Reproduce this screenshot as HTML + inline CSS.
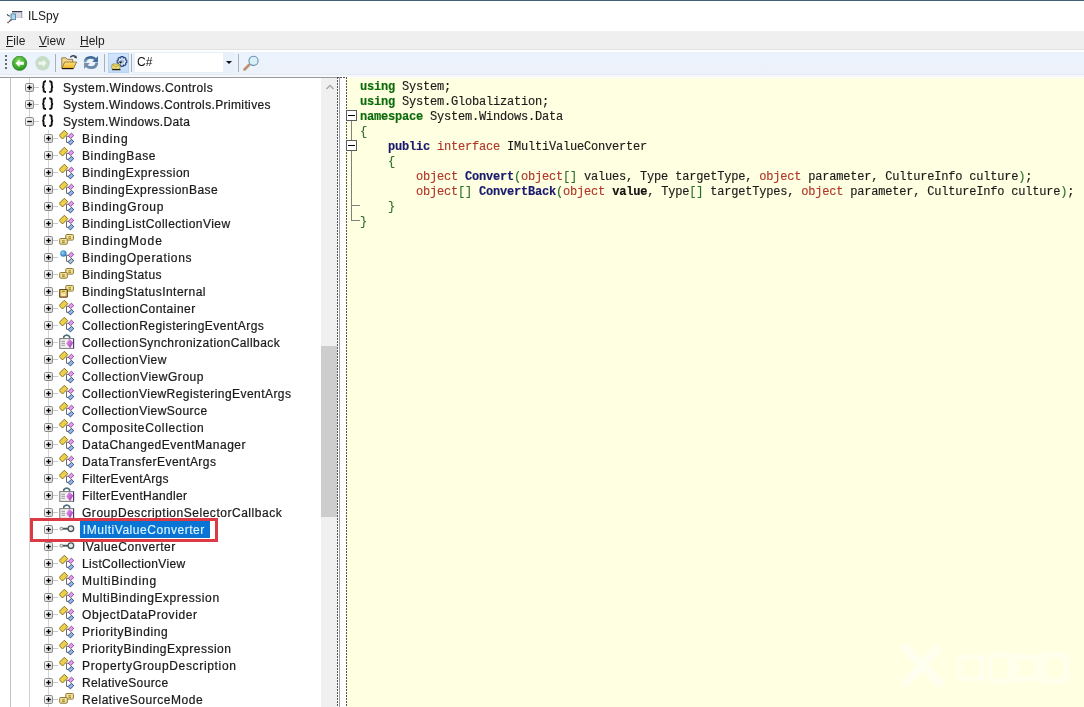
<!DOCTYPE html>
<html><head><meta charset="utf-8"><style>
*{margin:0;padding:0;box-sizing:border-box}
html,body{width:1084px;height:707px;overflow:hidden;background:#fff;font-family:"Liberation Sans",sans-serif;color:#1a1a1a}
.a{position:absolute}
.tt,.cl,.mi,#title,.gs{will-change:transform}
#topline{position:absolute;left:0;top:0;width:1084px;height:1px;background:#3f6478}
#title{position:absolute;left:28px;top:8px;font-size:12px;line-height:16px;color:#1a1a1a}
#menubar{position:absolute;left:0;top:31px;width:1084px;height:19px;background:#efefef;border-bottom:1px solid #e2e2e2}
.mi{position:absolute;top:2px;font-size:12px;line-height:16px;color:#1e1e1e}
.mi u{text-decoration:underline;text-underline-offset:1px}
#toolbar{position:absolute;left:0;top:50px;width:1084px;height:27px;background:linear-gradient(#ffffff 0 2px,#eaf3fd 2px,#edf2fa 24px,#e6eaf4 24px 25px,#f6f8fc 25px)}
.sep{position:absolute;top:54px;width:1px;height:18px;background:#a8b0bc}
#tree{position:absolute;left:0;top:77px;width:339px;height:630px;background:#fff;border-top:1px solid #9a9a9a;overflow:hidden}
.exp{position:absolute}
.ph{position:absolute;left:1.5px;top:3.2px;width:5px;height:1.3px;background:#000}
.pv{position:absolute;left:3.35px;top:1.4px;width:1.3px;height:5px;background:#000}
.hc{position:absolute;height:1px;background:#c8c8c8}
.ic{position:absolute;width:16px;height:16px}
.ic svg{display:block}
.nsi{position:absolute;font-weight:bold;font-size:12px;line-height:17px;letter-spacing:0px;color:#111}
.tt{position:absolute;-webkit-text-stroke:0.22px #1a1a1a;font-size:12px;line-height:17px;letter-spacing:0.33px;white-space:nowrap;color:#1a1a1a;padding:0 0 0 0}
.tt.sel{background:#0a74d4;color:#d8f6ff;-webkit-text-stroke:0.15px #d8f6ff;left:80px!important;padding-left:2.8px;padding-top:1px;width:130px;height:17px;overflow:visible}
#code{position:absolute;left:347px;top:78px;width:737px;height:629px;background:#ffffe1}
.cl{position:absolute;left:13px;font-family:"Liberation Mono",monospace;font-size:12px;line-height:15px;white-space:pre;letter-spacing:-0.2px;color:#1a1a1a;-webkit-text-stroke-width:0.15px}
.kg{color:#0b6b0b;font-weight:bold}
.kb{color:#191970;font-weight:bold}
.kr{color:#b0362a}
.br{color:#2f6f2f}
.fn{color:#191970;font-weight:bold}
.cl b{font-weight:bold;color:#111}
</style></head><body>
<div id="topline"></div>
<svg class="a" style="left:4px;top:6px" width="24" height="20" viewBox="0 0 24 20"><rect x="8" y="5.5" width="10.2" height="6.5" fill="#cfd0de"/><path d="M11 8H17M11 10H17" stroke="#e8eaf4" stroke-width="0.8"/><path d="M8 5.6H18.2" stroke="#2e2e44" stroke-width="1.1"/><path d="M17.8 6V12" stroke="#8a8aa0" stroke-width="0.7"/><rect x="7" y="8" width="4.4" height="5.6" fill="#aad6ee" stroke="#4a7a9a" stroke-width="0.8"/><path d="M3.3 8.2Q3.6 10.3 6.3 10" stroke="#3a5a5a" stroke-width="1.1" fill="none"/><path d="M7.3 13.8L3.6 16.8" stroke="#4a3a30" stroke-width="1.5" stroke-dasharray="1.2 0.6"/></svg>
<div id="title">ILSpy</div>
<div id="menubar">
 <div class="mi" style="left:6px"><u>F</u>ile</div>
 <div class="mi" style="left:39px"><u>V</u>iew</div>
 <div class="mi" style="left:80px"><u>H</u>elp</div>
</div>
<div id="toolbar"></div>
<div class="a" style="left:5px;top:55px;width:2px;height:14px;background:repeating-linear-gradient(#6a6a6a 0 2px,transparent 2px 4px)"></div>
<!-- back -->
<div class="a" style="left:12px;top:56px">
<svg width="16" height="16" viewBox="0 0 16 16"><defs><radialGradient id="gb" cx="0.45" cy="0.35" r="0.7"><stop offset="0" stop-color="#7ee05a"/><stop offset="1" stop-color="#1f8a1a"/></radialGradient></defs><circle cx="7.6" cy="7.3" r="7.2" fill="url(#gb)" stroke="#2a7a22" stroke-width="0.6"/><path d="M3.5 7.3L7.5 3.5V5.8H11.8V8.8H7.5V11.1Z" fill="#fff"/></svg>
</div>
<div class="a" style="left:35px;top:56px">
<svg width="16" height="16" viewBox="0 0 16 16"><circle cx="7.6" cy="7.3" r="7.2" fill="#c6dcc6"/><path d="M11.7 7.3L7.7 3.5V5.8H3.4V8.8H7.7V11.1Z" fill="#eef6ee"/></svg>
</div>
<div class="sep" style="left:55px"></div>
<!-- folder -->
<svg class="a" style="left:61px;top:54px" width="17" height="16" viewBox="0 0 17 16"><path d="M0.8 3.8H4.8L6.2 5.3H11.6V14.4H0.8Z" fill="#f3d890" stroke="#8a7048" stroke-width="0.9"/><defs><linearGradient id="fg" x1="0" y1="0" x2="0" y2="1"><stop offset="0" stop-color="#fbe27a"/><stop offset="1" stop-color="#f0b428"/></linearGradient></defs><path d="M1 14.4L3.6 8H15.6L12.6 14.4Z" fill="url(#fg)" stroke="#8a6a2a" stroke-width="0.8"/><path d="M1.2 14.6H12.4" stroke="#1a1208" stroke-width="1.2"/><path d="M9.3 3.2Q11.8 0.6 14.6 2.6" stroke="#303848" stroke-width="1.3" fill="none"/><path d="M13 3.8L16 4.6L15.4 1.4Z" fill="#303848"/></svg>
<!-- refresh -->
<svg class="a" style="left:83px;top:55px" width="16" height="15" viewBox="0 0 16 15"><defs><linearGradient id="rg" x1="0" y1="0" x2="0" y2="1"><stop offset="0" stop-color="#3a6590"/><stop offset="1" stop-color="#93abc3"/></linearGradient></defs><path d="M2.2 7.4Q2.2 2.3 8 2.3Q10.8 2.3 12.6 4.4" stroke="url(#rg)" stroke-width="2.8" fill="none"/><path d="M15 1V7H9.2Z" fill="#46709a"/><path d="M13.8 7.6Q13.8 12.7 8 12.7Q5.2 12.7 3.4 10.6" stroke="#6a88a8" stroke-width="2.8" fill="none"/><path d="M1 14V8H6.8Z" fill="#7892ae"/></svg>
<div class="sep" style="left:104px"></div>
<div class="a" style="left:108px;top:53px;width:21px;height:20px;background:linear-gradient(#d2e6fb,#c2dcf6);border:1px solid #b8d4f0"></div>
<svg class="a" style="left:108px;top:53px" width="21" height="20" viewBox="0 0 21 20"><g transform="translate(14,8.5)"><path d="M-1 -4.8H1L1.4 -3.6L2.8 -4L3.9 -2.9L3.5 -1.5L4.8 -1V1L3.5 1.5L3.9 2.9L2.8 4L1.4 3.6L1 4.8H-1L-1.4 3.6L-2.8 4L-3.9 2.9L-3.5 1.5L-4.8 1V-1L-3.5 -1.5L-3.9 -2.9L-2.8 -4L-1.4 -3.6Z" fill="#e4eef8" stroke="#2b4a86" stroke-width="1.2"/><circle r="1.6" fill="#c8daf0" stroke="#5a78a8" stroke-width="0.6"/></g><path d="M10.5 8.5H14.5L12.5 10.8Z" fill="#10182a"/><rect x="3.8" y="11" width="8.2" height="5.2" rx="1.5" fill="#f2e27a" stroke="#8a7a2a" stroke-width="0.7"/><path d="M4.6 12L7.9 14L11.2 12" stroke="#9a8a30" stroke-width="0.8" fill="none"/><path d="M4.2 16.6H12.5" stroke="#202010" stroke-width="1.3"/></svg>
<div class="sep" style="left:131px"></div>
<div class="a" style="left:134px;top:52px;width:100px;height:21px;background:#fff;border:1px solid #e6eef8"></div>
<div class="a" style="left:223px;top:53px;width:11px;height:19px;background:#e8f0fa"></div>
<div class="a" style="left:225.5px;top:61px;width:0;height:0;border-left:3px solid transparent;border-right:3px solid transparent;border-top:3px solid #111"></div>
<div class="a gs" style="left:137px;top:54px;font-size:12px;line-height:16px;color:#111">C#</div>
<div class="sep" style="left:238px"></div>
<div class="a" style="left:243px;top:55px">
<svg width="17" height="16" viewBox="0 0 17 16"><path d="M1.5 14.5L6 10" stroke="#c09070" stroke-width="2.6" stroke-linecap="round"/><circle cx="10.5" cy="5.8" r="4.6" fill="#d8f0f8" stroke="#6a90b0" stroke-width="1.1"/></svg>
</div>

<div id="tree">
</div>
<div class="a" style="left:10px;top:78px;width:1px;height:629px;background:#c4c4c4"></div>
<div class="a" style="left:29px;top:78px;width:1px;height:629px;background:#d0d0d0"></div>
<div class="a" style="left:48px;top:130px;width:1px;height:577px;background:#d4d4d4"></div>
<svg class="exp" style="left:25px;top:83px" width="9" height="9" viewBox="0 0 9 9"><defs><linearGradient id="eg" x1="0" y1="0" x2="1" y2="1"><stop offset="0" stop-color="#fff"/><stop offset="1" stop-color="#cfcfcf"/></linearGradient></defs><rect x="0.5" y="0.5" width="8" height="8" rx="1.2" fill="url(#eg)" stroke="#8a8c8c" stroke-width="1"/><path d="M2.2 4.5H6.8" stroke="#000" stroke-width="1.3"/><path d="M4.5 2.2V6.8" stroke="#000" stroke-width="1.3"/></svg>
<div class="hc" style="left:34px;top:87px;width:5px"></div>
<svg class="a" style="left:42px;top:79px" width="12" height="16" viewBox="0 0 12 16"><path d="M4 2.3Q1.6 2.3 1.6 4.2V6.2Q1.6 7.7 0.2 7.7Q1.6 7.7 1.6 9.2V11.2Q1.6 13 4 13" stroke="#111" stroke-width="1.9" fill="none"/><path d="M7.3 2.3Q9.7 2.3 9.7 4.2V6.2Q9.7 7.7 11.1 7.7Q9.7 7.7 9.7 9.2V11.2Q9.7 13 7.3 13" stroke="#111" stroke-width="1.9" fill="none"/></svg>
<div class="tt" style="left:63px;top:80px;letter-spacing:0.439px">System.Windows.Controls</div>
<svg class="exp" style="left:25px;top:100px" width="9" height="9" viewBox="0 0 9 9"><defs><linearGradient id="eg" x1="0" y1="0" x2="1" y2="1"><stop offset="0" stop-color="#fff"/><stop offset="1" stop-color="#cfcfcf"/></linearGradient></defs><rect x="0.5" y="0.5" width="8" height="8" rx="1.2" fill="url(#eg)" stroke="#8a8c8c" stroke-width="1"/><path d="M2.2 4.5H6.8" stroke="#000" stroke-width="1.3"/><path d="M4.5 2.2V6.8" stroke="#000" stroke-width="1.3"/></svg>
<div class="hc" style="left:34px;top:104px;width:5px"></div>
<svg class="a" style="left:42px;top:96px" width="12" height="16" viewBox="0 0 12 16"><path d="M4 2.3Q1.6 2.3 1.6 4.2V6.2Q1.6 7.7 0.2 7.7Q1.6 7.7 1.6 9.2V11.2Q1.6 13 4 13" stroke="#111" stroke-width="1.9" fill="none"/><path d="M7.3 2.3Q9.7 2.3 9.7 4.2V6.2Q9.7 7.7 11.1 7.7Q9.7 7.7 9.7 9.2V11.2Q9.7 13 7.3 13" stroke="#111" stroke-width="1.9" fill="none"/></svg>
<div class="tt" style="left:63px;top:97px;letter-spacing:0.369px">System.Windows.Controls.Primitives</div>
<svg class="exp" style="left:25px;top:117px" width="9" height="9" viewBox="0 0 9 9"><defs><linearGradient id="eg" x1="0" y1="0" x2="1" y2="1"><stop offset="0" stop-color="#fff"/><stop offset="1" stop-color="#cfcfcf"/></linearGradient></defs><rect x="0.5" y="0.5" width="8" height="8" rx="1.2" fill="url(#eg)" stroke="#8a8c8c" stroke-width="1"/><path d="M2.2 4.5H6.8" stroke="#000" stroke-width="1.3"/></svg>
<div class="hc" style="left:34px;top:121px;width:5px"></div>
<svg class="a" style="left:42px;top:113px" width="12" height="16" viewBox="0 0 12 16"><path d="M4 2.3Q1.6 2.3 1.6 4.2V6.2Q1.6 7.7 0.2 7.7Q1.6 7.7 1.6 9.2V11.2Q1.6 13 4 13" stroke="#111" stroke-width="1.9" fill="none"/><path d="M7.3 2.3Q9.7 2.3 9.7 4.2V6.2Q9.7 7.7 11.1 7.7Q9.7 7.7 9.7 9.2V11.2Q9.7 13 7.3 13" stroke="#111" stroke-width="1.9" fill="none"/></svg>
<div class="tt" style="left:63px;top:114px;letter-spacing:0.341px">System.Windows.Data</div>
<svg class="exp" style="left:44px;top:134px" width="9" height="9" viewBox="0 0 9 9"><defs><linearGradient id="eg" x1="0" y1="0" x2="1" y2="1"><stop offset="0" stop-color="#fff"/><stop offset="1" stop-color="#cfcfcf"/></linearGradient></defs><rect x="0.5" y="0.5" width="8" height="8" rx="1.2" fill="url(#eg)" stroke="#8a8c8c" stroke-width="1"/><path d="M2.2 4.5H6.8" stroke="#000" stroke-width="1.3"/><path d="M4.5 2.2V6.8" stroke="#000" stroke-width="1.3"/></svg>
<div class="hc" style="left:53px;top:138px;width:5px"></div>
<div class="ic" style="left:59px;top:130px"><svg width="16" height="16" viewBox="0 0 16 16"><path d="M7.5 6.3H10M7.5 6.3V12.3H10" stroke="#6a6a6a" stroke-width="1" fill="none"/><path d="M5.3 0.3L8.8 3.7L3.5 9L0.1 5.5Z" fill="#ecd04a" stroke="#7a6418" stroke-width="0.9"/><path d="M12.4 3.2L14.8 5.5L11.6 8.6L9.3 6.2Z" fill="#e79be8" stroke="#7b3f8e" stroke-width="0.9"/><path d="M12.4 9.3L14.8 11.6L11.4 14.9L9.1 12.6Z" fill="#93b4e6" stroke="#203f78" stroke-width="0.9"/></svg></div>
<div class="tt" style="left:82px;top:131px;letter-spacing:0.930px">Binding</div>
<svg class="exp" style="left:44px;top:151px" width="9" height="9" viewBox="0 0 9 9"><defs><linearGradient id="eg" x1="0" y1="0" x2="1" y2="1"><stop offset="0" stop-color="#fff"/><stop offset="1" stop-color="#cfcfcf"/></linearGradient></defs><rect x="0.5" y="0.5" width="8" height="8" rx="1.2" fill="url(#eg)" stroke="#8a8c8c" stroke-width="1"/><path d="M2.2 4.5H6.8" stroke="#000" stroke-width="1.3"/><path d="M4.5 2.2V6.8" stroke="#000" stroke-width="1.3"/></svg>
<div class="hc" style="left:53px;top:155px;width:5px"></div>
<div class="ic" style="left:59px;top:147px"><svg width="16" height="16" viewBox="0 0 16 16"><path d="M7.5 6.3H10M7.5 6.3V12.3H10" stroke="#6a6a6a" stroke-width="1" fill="none"/><path d="M5.3 0.3L8.8 3.7L3.5 9L0.1 5.5Z" fill="#ecd04a" stroke="#7a6418" stroke-width="0.9"/><path d="M12.4 3.2L14.8 5.5L11.6 8.6L9.3 6.2Z" fill="#e79be8" stroke="#7b3f8e" stroke-width="0.9"/><path d="M12.4 9.3L14.8 11.6L11.4 14.9L9.1 12.6Z" fill="#93b4e6" stroke="#203f78" stroke-width="0.9"/></svg></div>
<div class="tt" style="left:82px;top:148px;letter-spacing:0.610px">BindingBase</div>
<svg class="exp" style="left:44px;top:168px" width="9" height="9" viewBox="0 0 9 9"><defs><linearGradient id="eg" x1="0" y1="0" x2="1" y2="1"><stop offset="0" stop-color="#fff"/><stop offset="1" stop-color="#cfcfcf"/></linearGradient></defs><rect x="0.5" y="0.5" width="8" height="8" rx="1.2" fill="url(#eg)" stroke="#8a8c8c" stroke-width="1"/><path d="M2.2 4.5H6.8" stroke="#000" stroke-width="1.3"/><path d="M4.5 2.2V6.8" stroke="#000" stroke-width="1.3"/></svg>
<div class="hc" style="left:53px;top:172px;width:5px"></div>
<div class="ic" style="left:59px;top:164px"><svg width="16" height="16" viewBox="0 0 16 16"><path d="M7.5 6.3H10M7.5 6.3V12.3H10" stroke="#6a6a6a" stroke-width="1" fill="none"/><path d="M5.3 0.3L8.8 3.7L3.5 9L0.1 5.5Z" fill="#ecd04a" stroke="#7a6418" stroke-width="0.9"/><path d="M12.4 3.2L14.8 5.5L11.6 8.6L9.3 6.2Z" fill="#e79be8" stroke="#7b3f8e" stroke-width="0.9"/><path d="M12.4 9.3L14.8 11.6L11.4 14.9L9.1 12.6Z" fill="#93b4e6" stroke="#203f78" stroke-width="0.9"/></svg></div>
<div class="tt" style="left:82px;top:165px;letter-spacing:0.524px">BindingExpression</div>
<svg class="exp" style="left:44px;top:185px" width="9" height="9" viewBox="0 0 9 9"><defs><linearGradient id="eg" x1="0" y1="0" x2="1" y2="1"><stop offset="0" stop-color="#fff"/><stop offset="1" stop-color="#cfcfcf"/></linearGradient></defs><rect x="0.5" y="0.5" width="8" height="8" rx="1.2" fill="url(#eg)" stroke="#8a8c8c" stroke-width="1"/><path d="M2.2 4.5H6.8" stroke="#000" stroke-width="1.3"/><path d="M4.5 2.2V6.8" stroke="#000" stroke-width="1.3"/></svg>
<div class="hc" style="left:53px;top:189px;width:5px"></div>
<div class="ic" style="left:59px;top:181px"><svg width="16" height="16" viewBox="0 0 16 16"><path d="M7.5 6.3H10M7.5 6.3V12.3H10" stroke="#6a6a6a" stroke-width="1" fill="none"/><path d="M5.3 0.3L8.8 3.7L3.5 9L0.1 5.5Z" fill="#ecd04a" stroke="#7a6418" stroke-width="0.9"/><path d="M12.4 3.2L14.8 5.5L11.6 8.6L9.3 6.2Z" fill="#e79be8" stroke="#7b3f8e" stroke-width="0.9"/><path d="M12.4 9.3L14.8 11.6L11.4 14.9L9.1 12.6Z" fill="#93b4e6" stroke="#203f78" stroke-width="0.9"/></svg></div>
<div class="tt" style="left:82px;top:182px;letter-spacing:0.445px">BindingExpressionBase</div>
<svg class="exp" style="left:44px;top:202px" width="9" height="9" viewBox="0 0 9 9"><defs><linearGradient id="eg" x1="0" y1="0" x2="1" y2="1"><stop offset="0" stop-color="#fff"/><stop offset="1" stop-color="#cfcfcf"/></linearGradient></defs><rect x="0.5" y="0.5" width="8" height="8" rx="1.2" fill="url(#eg)" stroke="#8a8c8c" stroke-width="1"/><path d="M2.2 4.5H6.8" stroke="#000" stroke-width="1.3"/><path d="M4.5 2.2V6.8" stroke="#000" stroke-width="1.3"/></svg>
<div class="hc" style="left:53px;top:206px;width:5px"></div>
<div class="ic" style="left:59px;top:198px"><svg width="16" height="16" viewBox="0 0 16 16"><path d="M7.5 6.3H10M7.5 6.3V12.3H10" stroke="#6a6a6a" stroke-width="1" fill="none"/><path d="M5.3 0.3L8.8 3.7L3.5 9L0.1 5.5Z" fill="#ecd04a" stroke="#7a6418" stroke-width="0.9"/><path d="M12.4 3.2L14.8 5.5L11.6 8.6L9.3 6.2Z" fill="#e79be8" stroke="#7b3f8e" stroke-width="0.9"/><path d="M12.4 9.3L14.8 11.6L11.4 14.9L9.1 12.6Z" fill="#93b4e6" stroke="#203f78" stroke-width="0.9"/></svg></div>
<div class="tt" style="left:82px;top:199px;letter-spacing:0.730px">BindingGroup</div>
<svg class="exp" style="left:44px;top:219px" width="9" height="9" viewBox="0 0 9 9"><defs><linearGradient id="eg" x1="0" y1="0" x2="1" y2="1"><stop offset="0" stop-color="#fff"/><stop offset="1" stop-color="#cfcfcf"/></linearGradient></defs><rect x="0.5" y="0.5" width="8" height="8" rx="1.2" fill="url(#eg)" stroke="#8a8c8c" stroke-width="1"/><path d="M2.2 4.5H6.8" stroke="#000" stroke-width="1.3"/><path d="M4.5 2.2V6.8" stroke="#000" stroke-width="1.3"/></svg>
<div class="hc" style="left:53px;top:223px;width:5px"></div>
<div class="ic" style="left:59px;top:215px"><svg width="16" height="16" viewBox="0 0 16 16"><path d="M7.5 6.3H10M7.5 6.3V12.3H10" stroke="#6a6a6a" stroke-width="1" fill="none"/><path d="M5.3 0.3L8.8 3.7L3.5 9L0.1 5.5Z" fill="#ecd04a" stroke="#7a6418" stroke-width="0.9"/><path d="M12.4 3.2L14.8 5.5L11.6 8.6L9.3 6.2Z" fill="#e79be8" stroke="#7b3f8e" stroke-width="0.9"/><path d="M12.4 9.3L14.8 11.6L11.4 14.9L9.1 12.6Z" fill="#93b4e6" stroke="#203f78" stroke-width="0.9"/></svg></div>
<div class="tt" style="left:82px;top:216px;letter-spacing:0.455px">BindingListCollectionView</div>
<svg class="exp" style="left:44px;top:236px" width="9" height="9" viewBox="0 0 9 9"><defs><linearGradient id="eg" x1="0" y1="0" x2="1" y2="1"><stop offset="0" stop-color="#fff"/><stop offset="1" stop-color="#cfcfcf"/></linearGradient></defs><rect x="0.5" y="0.5" width="8" height="8" rx="1.2" fill="url(#eg)" stroke="#8a8c8c" stroke-width="1"/><path d="M2.2 4.5H6.8" stroke="#000" stroke-width="1.3"/><path d="M4.5 2.2V6.8" stroke="#000" stroke-width="1.3"/></svg>
<div class="hc" style="left:53px;top:240px;width:5px"></div>
<div class="ic" style="left:59px;top:232px"><svg width="16" height="16" viewBox="0 0 16 16"><rect x="6.8" y="2.5" width="7.6" height="5.6" rx="0.8" fill="#f3e39a" stroke="#8f7a35" stroke-width="1"/><path d="M9.5 4.8H12M9.5 6.3H12" stroke="#8a7020" stroke-width="0.9"/><rect x="0.7" y="6.5" width="7.6" height="5.7" rx="0.8" fill="#f3e39a" stroke="#8f7a35" stroke-width="1"/><path d="M3 8.8H5.8M3 10.3H5.8" stroke="#8a7020" stroke-width="0.9"/></svg></div>
<div class="tt" style="left:82px;top:233px;letter-spacing:0.980px">BindingMode</div>
<svg class="exp" style="left:44px;top:253px" width="9" height="9" viewBox="0 0 9 9"><defs><linearGradient id="eg" x1="0" y1="0" x2="1" y2="1"><stop offset="0" stop-color="#fff"/><stop offset="1" stop-color="#cfcfcf"/></linearGradient></defs><rect x="0.5" y="0.5" width="8" height="8" rx="1.2" fill="url(#eg)" stroke="#8a8c8c" stroke-width="1"/><path d="M2.2 4.5H6.8" stroke="#000" stroke-width="1.3"/><path d="M4.5 2.2V6.8" stroke="#000" stroke-width="1.3"/></svg>
<div class="hc" style="left:53px;top:257px;width:5px"></div>
<div class="ic" style="left:59px;top:249px"><svg width="16" height="16" viewBox="0 0 16 16"><defs><radialGradient id="bb" cx="0.4" cy="0.4" r="0.6"><stop offset="0" stop-color="#8cd0f4"/><stop offset="1" stop-color="#2f7ab8"/></radialGradient></defs><path d="M7.5 6.3H10M7.5 6.3V12.3H10" stroke="#6a6a6a" stroke-width="1" fill="none"/><circle cx="4.4" cy="4.5" r="3.2" fill="url(#bb)"/><path d="M12.4 3.2L14.8 5.5L11.6 8.6L9.3 6.2Z" fill="#e79be8" stroke="#7b3f8e" stroke-width="0.9"/><path d="M12.4 9.3L14.8 11.6L11.4 14.9L9.1 12.6Z" fill="#a8c8e0" stroke="#1f3a50" stroke-width="0.9"/></svg></div>
<div class="tt" style="left:82px;top:250px;letter-spacing:0.674px">BindingOperations</div>
<svg class="exp" style="left:44px;top:270px" width="9" height="9" viewBox="0 0 9 9"><defs><linearGradient id="eg" x1="0" y1="0" x2="1" y2="1"><stop offset="0" stop-color="#fff"/><stop offset="1" stop-color="#cfcfcf"/></linearGradient></defs><rect x="0.5" y="0.5" width="8" height="8" rx="1.2" fill="url(#eg)" stroke="#8a8c8c" stroke-width="1"/><path d="M2.2 4.5H6.8" stroke="#000" stroke-width="1.3"/><path d="M4.5 2.2V6.8" stroke="#000" stroke-width="1.3"/></svg>
<div class="hc" style="left:53px;top:274px;width:5px"></div>
<div class="ic" style="left:59px;top:266px"><svg width="16" height="16" viewBox="0 0 16 16"><rect x="6.8" y="2.5" width="7.6" height="5.6" rx="0.8" fill="#f3e39a" stroke="#8f7a35" stroke-width="1"/><path d="M9.5 4.8H12M9.5 6.3H12" stroke="#8a7020" stroke-width="0.9"/><rect x="0.7" y="6.5" width="7.6" height="5.7" rx="0.8" fill="#f3e39a" stroke="#8f7a35" stroke-width="1"/><path d="M3 8.8H5.8M3 10.3H5.8" stroke="#8a7020" stroke-width="0.9"/></svg></div>
<div class="tt" style="left:82px;top:267px;letter-spacing:0.455px">BindingStatus</div>
<svg class="exp" style="left:44px;top:287px" width="9" height="9" viewBox="0 0 9 9"><defs><linearGradient id="eg" x1="0" y1="0" x2="1" y2="1"><stop offset="0" stop-color="#fff"/><stop offset="1" stop-color="#cfcfcf"/></linearGradient></defs><rect x="0.5" y="0.5" width="8" height="8" rx="1.2" fill="url(#eg)" stroke="#8a8c8c" stroke-width="1"/><path d="M2.2 4.5H6.8" stroke="#000" stroke-width="1.3"/><path d="M4.5 2.2V6.8" stroke="#000" stroke-width="1.3"/></svg>
<div class="hc" style="left:53px;top:291px;width:5px"></div>
<div class="ic" style="left:59px;top:283px"><svg width="16" height="16" viewBox="0 0 16 16"><rect x="6.8" y="2.5" width="7.6" height="5.6" rx="0.8" fill="#f3e39a" stroke="#8f7a35" stroke-width="1"/><path d="M9.5 4.8H12M9.5 6.3H12" stroke="#8a7020" stroke-width="0.9"/><rect x="0.7" y="6.5" width="7.6" height="7.6" rx="0.5" fill="#ecd27a" stroke="#6a4a18" stroke-width="1.2"/><path d="M3 8.3H5.8" stroke="#8a7020" stroke-width="0.9"/><path d="M2.6 10.8Q4.4 13.6 6.2 10.8" stroke="#fff4cc" stroke-width="1.3" fill="none"/></svg></div>
<div class="tt" style="left:82px;top:284px;letter-spacing:0.470px">BindingStatusInternal</div>
<svg class="exp" style="left:44px;top:304px" width="9" height="9" viewBox="0 0 9 9"><defs><linearGradient id="eg" x1="0" y1="0" x2="1" y2="1"><stop offset="0" stop-color="#fff"/><stop offset="1" stop-color="#cfcfcf"/></linearGradient></defs><rect x="0.5" y="0.5" width="8" height="8" rx="1.2" fill="url(#eg)" stroke="#8a8c8c" stroke-width="1"/><path d="M2.2 4.5H6.8" stroke="#000" stroke-width="1.3"/><path d="M4.5 2.2V6.8" stroke="#000" stroke-width="1.3"/></svg>
<div class="hc" style="left:53px;top:308px;width:5px"></div>
<div class="ic" style="left:59px;top:300px"><svg width="16" height="16" viewBox="0 0 16 16"><path d="M7.5 6.3H10M7.5 6.3V12.3H10" stroke="#6a6a6a" stroke-width="1" fill="none"/><path d="M5.3 0.3L8.8 3.7L3.5 9L0.1 5.5Z" fill="#ecd04a" stroke="#7a6418" stroke-width="0.9"/><path d="M12.4 3.2L14.8 5.5L11.6 8.6L9.3 6.2Z" fill="#e79be8" stroke="#7b3f8e" stroke-width="0.9"/><path d="M12.4 9.3L14.8 11.6L11.4 14.9L9.1 12.6Z" fill="#93b4e6" stroke="#203f78" stroke-width="0.9"/></svg></div>
<div class="tt" style="left:82px;top:301px;letter-spacing:0.469px">CollectionContainer</div>
<svg class="exp" style="left:44px;top:321px" width="9" height="9" viewBox="0 0 9 9"><defs><linearGradient id="eg" x1="0" y1="0" x2="1" y2="1"><stop offset="0" stop-color="#fff"/><stop offset="1" stop-color="#cfcfcf"/></linearGradient></defs><rect x="0.5" y="0.5" width="8" height="8" rx="1.2" fill="url(#eg)" stroke="#8a8c8c" stroke-width="1"/><path d="M2.2 4.5H6.8" stroke="#000" stroke-width="1.3"/><path d="M4.5 2.2V6.8" stroke="#000" stroke-width="1.3"/></svg>
<div class="hc" style="left:53px;top:325px;width:5px"></div>
<div class="ic" style="left:59px;top:317px"><svg width="16" height="16" viewBox="0 0 16 16"><path d="M7.5 6.3H10M7.5 6.3V12.3H10" stroke="#6a6a6a" stroke-width="1" fill="none"/><path d="M5.3 0.3L8.8 3.7L3.5 9L0.1 5.5Z" fill="#ecd04a" stroke="#7a6418" stroke-width="0.9"/><path d="M12.4 3.2L14.8 5.5L11.6 8.6L9.3 6.2Z" fill="#e79be8" stroke="#7b3f8e" stroke-width="0.9"/><path d="M12.4 9.3L14.8 11.6L11.4 14.9L9.1 12.6Z" fill="#93b4e6" stroke="#203f78" stroke-width="0.9"/></svg></div>
<div class="tt" style="left:82px;top:318px;letter-spacing:0.451px">CollectionRegisteringEventArgs</div>
<svg class="exp" style="left:44px;top:338px" width="9" height="9" viewBox="0 0 9 9"><defs><linearGradient id="eg" x1="0" y1="0" x2="1" y2="1"><stop offset="0" stop-color="#fff"/><stop offset="1" stop-color="#cfcfcf"/></linearGradient></defs><rect x="0.5" y="0.5" width="8" height="8" rx="1.2" fill="url(#eg)" stroke="#8a8c8c" stroke-width="1"/><path d="M2.2 4.5H6.8" stroke="#000" stroke-width="1.3"/><path d="M4.5 2.2V6.8" stroke="#000" stroke-width="1.3"/></svg>
<div class="hc" style="left:53px;top:342px;width:5px"></div>
<div class="ic" style="left:59px;top:334px"><svg width="16" height="16" viewBox="0 0 16 16"><path d="M4.8 4.6V2.6Q7.7 -0.4 10.6 2.6V4.6" stroke="#4e6e7c" stroke-width="1.6" fill="none"/><rect x="0.8" y="4.6" width="13.8" height="9.8" fill="#f2f2f2" stroke="#787878" stroke-width="1"/><path d="M2.4 7.3H6M2.4 9.3H6M2.4 11.3H6" stroke="#8a8a8a" stroke-width="0.9"/><defs><linearGradient id="dg" x1="0" y1="0" x2="1" y2="1"><stop offset="0" stop-color="#f0a0f0"/><stop offset="1" stop-color="#a030b0"/></linearGradient></defs><path d="M10.2 4.8L14.2 8.6L11.2 14.2L7.2 9.6Z" fill="url(#dg)"/><path d="M14.6 4.8V14.4" stroke="#3a3a6a" stroke-width="1"/></svg></div>
<div class="tt" style="left:82px;top:335px;letter-spacing:0.424px">CollectionSynchronizationCallback</div>
<svg class="exp" style="left:44px;top:355px" width="9" height="9" viewBox="0 0 9 9"><defs><linearGradient id="eg" x1="0" y1="0" x2="1" y2="1"><stop offset="0" stop-color="#fff"/><stop offset="1" stop-color="#cfcfcf"/></linearGradient></defs><rect x="0.5" y="0.5" width="8" height="8" rx="1.2" fill="url(#eg)" stroke="#8a8c8c" stroke-width="1"/><path d="M2.2 4.5H6.8" stroke="#000" stroke-width="1.3"/><path d="M4.5 2.2V6.8" stroke="#000" stroke-width="1.3"/></svg>
<div class="hc" style="left:53px;top:359px;width:5px"></div>
<div class="ic" style="left:59px;top:351px"><svg width="16" height="16" viewBox="0 0 16 16"><path d="M7.5 6.3H10M7.5 6.3V12.3H10" stroke="#6a6a6a" stroke-width="1" fill="none"/><path d="M5.3 0.3L8.8 3.7L3.5 9L0.1 5.5Z" fill="#ecd04a" stroke="#7a6418" stroke-width="0.9"/><path d="M12.4 3.2L14.8 5.5L11.6 8.6L9.3 6.2Z" fill="#e79be8" stroke="#7b3f8e" stroke-width="0.9"/><path d="M12.4 9.3L14.8 11.6L11.4 14.9L9.1 12.6Z" fill="#93b4e6" stroke="#203f78" stroke-width="0.9"/></svg></div>
<div class="tt" style="left:82px;top:352px;letter-spacing:0.453px">CollectionView</div>
<svg class="exp" style="left:44px;top:372px" width="9" height="9" viewBox="0 0 9 9"><defs><linearGradient id="eg" x1="0" y1="0" x2="1" y2="1"><stop offset="0" stop-color="#fff"/><stop offset="1" stop-color="#cfcfcf"/></linearGradient></defs><rect x="0.5" y="0.5" width="8" height="8" rx="1.2" fill="url(#eg)" stroke="#8a8c8c" stroke-width="1"/><path d="M2.2 4.5H6.8" stroke="#000" stroke-width="1.3"/><path d="M4.5 2.2V6.8" stroke="#000" stroke-width="1.3"/></svg>
<div class="hc" style="left:53px;top:376px;width:5px"></div>
<div class="ic" style="left:59px;top:368px"><svg width="16" height="16" viewBox="0 0 16 16"><path d="M7.5 6.3H10M7.5 6.3V12.3H10" stroke="#6a6a6a" stroke-width="1" fill="none"/><path d="M5.3 0.3L8.8 3.7L3.5 9L0.1 5.5Z" fill="#ecd04a" stroke="#7a6418" stroke-width="0.9"/><path d="M12.4 3.2L14.8 5.5L11.6 8.6L9.3 6.2Z" fill="#e79be8" stroke="#7b3f8e" stroke-width="0.9"/><path d="M12.4 9.3L14.8 11.6L11.4 14.9L9.1 12.6Z" fill="#93b4e6" stroke="#203f78" stroke-width="0.9"/></svg></div>
<div class="tt" style="left:82px;top:369px;letter-spacing:0.536px">CollectionViewGroup</div>
<svg class="exp" style="left:44px;top:389px" width="9" height="9" viewBox="0 0 9 9"><defs><linearGradient id="eg" x1="0" y1="0" x2="1" y2="1"><stop offset="0" stop-color="#fff"/><stop offset="1" stop-color="#cfcfcf"/></linearGradient></defs><rect x="0.5" y="0.5" width="8" height="8" rx="1.2" fill="url(#eg)" stroke="#8a8c8c" stroke-width="1"/><path d="M2.2 4.5H6.8" stroke="#000" stroke-width="1.3"/><path d="M4.5 2.2V6.8" stroke="#000" stroke-width="1.3"/></svg>
<div class="hc" style="left:53px;top:393px;width:5px"></div>
<div class="ic" style="left:59px;top:385px"><svg width="16" height="16" viewBox="0 0 16 16"><path d="M7.5 6.3H10M7.5 6.3V12.3H10" stroke="#6a6a6a" stroke-width="1" fill="none"/><path d="M5.3 0.3L8.8 3.7L3.5 9L0.1 5.5Z" fill="#ecd04a" stroke="#7a6418" stroke-width="0.9"/><path d="M12.4 3.2L14.8 5.5L11.6 8.6L9.3 6.2Z" fill="#e79be8" stroke="#7b3f8e" stroke-width="0.9"/><path d="M12.4 9.3L14.8 11.6L11.4 14.9L9.1 12.6Z" fill="#93b4e6" stroke="#203f78" stroke-width="0.9"/></svg></div>
<div class="tt" style="left:82px;top:386px;letter-spacing:0.436px">CollectionViewRegisteringEventArgs</div>
<svg class="exp" style="left:44px;top:406px" width="9" height="9" viewBox="0 0 9 9"><defs><linearGradient id="eg" x1="0" y1="0" x2="1" y2="1"><stop offset="0" stop-color="#fff"/><stop offset="1" stop-color="#cfcfcf"/></linearGradient></defs><rect x="0.5" y="0.5" width="8" height="8" rx="1.2" fill="url(#eg)" stroke="#8a8c8c" stroke-width="1"/><path d="M2.2 4.5H6.8" stroke="#000" stroke-width="1.3"/><path d="M4.5 2.2V6.8" stroke="#000" stroke-width="1.3"/></svg>
<div class="hc" style="left:53px;top:410px;width:5px"></div>
<div class="ic" style="left:59px;top:402px"><svg width="16" height="16" viewBox="0 0 16 16"><path d="M7.5 6.3H10M7.5 6.3V12.3H10" stroke="#6a6a6a" stroke-width="1" fill="none"/><path d="M5.3 0.3L8.8 3.7L3.5 9L0.1 5.5Z" fill="#ecd04a" stroke="#7a6418" stroke-width="0.9"/><path d="M12.4 3.2L14.8 5.5L11.6 8.6L9.3 6.2Z" fill="#e79be8" stroke="#7b3f8e" stroke-width="0.9"/><path d="M12.4 9.3L14.8 11.6L11.4 14.9L9.1 12.6Z" fill="#93b4e6" stroke="#203f78" stroke-width="0.9"/></svg></div>
<div class="tt" style="left:82px;top:403px;letter-spacing:0.451px">CollectionViewSource</div>
<svg class="exp" style="left:44px;top:423px" width="9" height="9" viewBox="0 0 9 9"><defs><linearGradient id="eg" x1="0" y1="0" x2="1" y2="1"><stop offset="0" stop-color="#fff"/><stop offset="1" stop-color="#cfcfcf"/></linearGradient></defs><rect x="0.5" y="0.5" width="8" height="8" rx="1.2" fill="url(#eg)" stroke="#8a8c8c" stroke-width="1"/><path d="M2.2 4.5H6.8" stroke="#000" stroke-width="1.3"/><path d="M4.5 2.2V6.8" stroke="#000" stroke-width="1.3"/></svg>
<div class="hc" style="left:53px;top:427px;width:5px"></div>
<div class="ic" style="left:59px;top:419px"><svg width="16" height="16" viewBox="0 0 16 16"><path d="M7.5 6.3H10M7.5 6.3V12.3H10" stroke="#6a6a6a" stroke-width="1" fill="none"/><path d="M5.3 0.3L8.8 3.7L3.5 9L0.1 5.5Z" fill="#ecd04a" stroke="#7a6418" stroke-width="0.9"/><path d="M12.4 3.2L14.8 5.5L11.6 8.6L9.3 6.2Z" fill="#e79be8" stroke="#7b3f8e" stroke-width="0.9"/><path d="M12.4 9.3L14.8 11.6L11.4 14.9L9.1 12.6Z" fill="#93b4e6" stroke="#203f78" stroke-width="0.9"/></svg></div>
<div class="tt" style="left:82px;top:420px;letter-spacing:0.647px">CompositeCollection</div>
<svg class="exp" style="left:44px;top:440px" width="9" height="9" viewBox="0 0 9 9"><defs><linearGradient id="eg" x1="0" y1="0" x2="1" y2="1"><stop offset="0" stop-color="#fff"/><stop offset="1" stop-color="#cfcfcf"/></linearGradient></defs><rect x="0.5" y="0.5" width="8" height="8" rx="1.2" fill="url(#eg)" stroke="#8a8c8c" stroke-width="1"/><path d="M2.2 4.5H6.8" stroke="#000" stroke-width="1.3"/><path d="M4.5 2.2V6.8" stroke="#000" stroke-width="1.3"/></svg>
<div class="hc" style="left:53px;top:444px;width:5px"></div>
<div class="ic" style="left:59px;top:436px"><svg width="16" height="16" viewBox="0 0 16 16"><path d="M7.5 6.3H10M7.5 6.3V12.3H10" stroke="#6a6a6a" stroke-width="1" fill="none"/><path d="M5.3 0.3L8.8 3.7L3.5 9L0.1 5.5Z" fill="#ecd04a" stroke="#7a6418" stroke-width="0.9"/><path d="M12.4 3.2L14.8 5.5L11.6 8.6L9.3 6.2Z" fill="#e79be8" stroke="#7b3f8e" stroke-width="0.9"/><path d="M12.4 9.3L14.8 11.6L11.4 14.9L9.1 12.6Z" fill="#93b4e6" stroke="#203f78" stroke-width="0.9"/></svg></div>
<div class="tt" style="left:82px;top:437px;letter-spacing:0.521px">DataChangedEventManager</div>
<svg class="exp" style="left:44px;top:457px" width="9" height="9" viewBox="0 0 9 9"><defs><linearGradient id="eg" x1="0" y1="0" x2="1" y2="1"><stop offset="0" stop-color="#fff"/><stop offset="1" stop-color="#cfcfcf"/></linearGradient></defs><rect x="0.5" y="0.5" width="8" height="8" rx="1.2" fill="url(#eg)" stroke="#8a8c8c" stroke-width="1"/><path d="M2.2 4.5H6.8" stroke="#000" stroke-width="1.3"/><path d="M4.5 2.2V6.8" stroke="#000" stroke-width="1.3"/></svg>
<div class="hc" style="left:53px;top:461px;width:5px"></div>
<div class="ic" style="left:59px;top:453px"><svg width="16" height="16" viewBox="0 0 16 16"><path d="M7.5 6.3H10M7.5 6.3V12.3H10" stroke="#6a6a6a" stroke-width="1" fill="none"/><path d="M5.3 0.3L8.8 3.7L3.5 9L0.1 5.5Z" fill="#ecd04a" stroke="#7a6418" stroke-width="0.9"/><path d="M12.4 3.2L14.8 5.5L11.6 8.6L9.3 6.2Z" fill="#e79be8" stroke="#7b3f8e" stroke-width="0.9"/><path d="M12.4 9.3L14.8 11.6L11.4 14.9L9.1 12.6Z" fill="#93b4e6" stroke="#203f78" stroke-width="0.9"/></svg></div>
<div class="tt" style="left:82px;top:454px;letter-spacing:0.450px">DataTransferEventArgs</div>
<svg class="exp" style="left:44px;top:474px" width="9" height="9" viewBox="0 0 9 9"><defs><linearGradient id="eg" x1="0" y1="0" x2="1" y2="1"><stop offset="0" stop-color="#fff"/><stop offset="1" stop-color="#cfcfcf"/></linearGradient></defs><rect x="0.5" y="0.5" width="8" height="8" rx="1.2" fill="url(#eg)" stroke="#8a8c8c" stroke-width="1"/><path d="M2.2 4.5H6.8" stroke="#000" stroke-width="1.3"/><path d="M4.5 2.2V6.8" stroke="#000" stroke-width="1.3"/></svg>
<div class="hc" style="left:53px;top:478px;width:5px"></div>
<div class="ic" style="left:59px;top:470px"><svg width="16" height="16" viewBox="0 0 16 16"><path d="M7.5 6.3H10M7.5 6.3V12.3H10" stroke="#6a6a6a" stroke-width="1" fill="none"/><path d="M5.3 0.3L8.8 3.7L3.5 9L0.1 5.5Z" fill="#ecd04a" stroke="#7a6418" stroke-width="0.9"/><path d="M12.4 3.2L14.8 5.5L11.6 8.6L9.3 6.2Z" fill="#e79be8" stroke="#7b3f8e" stroke-width="0.9"/><path d="M12.4 9.3L14.8 11.6L11.4 14.9L9.1 12.6Z" fill="#93b4e6" stroke="#203f78" stroke-width="0.9"/></svg></div>
<div class="tt" style="left:82px;top:471px;letter-spacing:0.323px">FilterEventArgs</div>
<svg class="exp" style="left:44px;top:491px" width="9" height="9" viewBox="0 0 9 9"><defs><linearGradient id="eg" x1="0" y1="0" x2="1" y2="1"><stop offset="0" stop-color="#fff"/><stop offset="1" stop-color="#cfcfcf"/></linearGradient></defs><rect x="0.5" y="0.5" width="8" height="8" rx="1.2" fill="url(#eg)" stroke="#8a8c8c" stroke-width="1"/><path d="M2.2 4.5H6.8" stroke="#000" stroke-width="1.3"/><path d="M4.5 2.2V6.8" stroke="#000" stroke-width="1.3"/></svg>
<div class="hc" style="left:53px;top:495px;width:5px"></div>
<div class="ic" style="left:59px;top:487px"><svg width="16" height="16" viewBox="0 0 16 16"><path d="M4.8 4.6V2.6Q7.7 -0.4 10.6 2.6V4.6" stroke="#4e6e7c" stroke-width="1.6" fill="none"/><rect x="0.8" y="4.6" width="13.8" height="9.8" fill="#f2f2f2" stroke="#787878" stroke-width="1"/><path d="M2.4 7.3H6M2.4 9.3H6M2.4 11.3H6" stroke="#8a8a8a" stroke-width="0.9"/><defs><linearGradient id="dg" x1="0" y1="0" x2="1" y2="1"><stop offset="0" stop-color="#f0a0f0"/><stop offset="1" stop-color="#a030b0"/></linearGradient></defs><path d="M10.2 4.8L14.2 8.6L11.2 14.2L7.2 9.6Z" fill="url(#dg)"/><path d="M14.6 4.8V14.4" stroke="#3a3a6a" stroke-width="1"/></svg></div>
<div class="tt" style="left:82px;top:488px;letter-spacing:0.336px">FilterEventHandler</div>
<svg class="exp" style="left:44px;top:508px" width="9" height="9" viewBox="0 0 9 9"><defs><linearGradient id="eg" x1="0" y1="0" x2="1" y2="1"><stop offset="0" stop-color="#fff"/><stop offset="1" stop-color="#cfcfcf"/></linearGradient></defs><rect x="0.5" y="0.5" width="8" height="8" rx="1.2" fill="url(#eg)" stroke="#8a8c8c" stroke-width="1"/><path d="M2.2 4.5H6.8" stroke="#000" stroke-width="1.3"/><path d="M4.5 2.2V6.8" stroke="#000" stroke-width="1.3"/></svg>
<div class="hc" style="left:53px;top:512px;width:5px"></div>
<div class="ic" style="left:59px;top:504px"><svg width="16" height="16" viewBox="0 0 16 16"><path d="M4.8 4.6V2.6Q7.7 -0.4 10.6 2.6V4.6" stroke="#4e6e7c" stroke-width="1.6" fill="none"/><rect x="0.8" y="4.6" width="13.8" height="9.8" fill="#f2f2f2" stroke="#787878" stroke-width="1"/><path d="M2.4 7.3H6M2.4 9.3H6M2.4 11.3H6" stroke="#8a8a8a" stroke-width="0.9"/><defs><linearGradient id="dg" x1="0" y1="0" x2="1" y2="1"><stop offset="0" stop-color="#f0a0f0"/><stop offset="1" stop-color="#a030b0"/></linearGradient></defs><path d="M10.2 4.8L14.2 8.6L11.2 14.2L7.2 9.6Z" fill="url(#dg)"/><path d="M14.6 4.8V14.4" stroke="#3a3a6a" stroke-width="1"/></svg></div>
<div class="tt" style="left:82px;top:505px;letter-spacing:0.524px">GroupDescriptionSelectorCallback</div>
<svg class="exp" style="left:44px;top:525px" width="9" height="9" viewBox="0 0 9 9"><defs><linearGradient id="eg" x1="0" y1="0" x2="1" y2="1"><stop offset="0" stop-color="#fff"/><stop offset="1" stop-color="#cfcfcf"/></linearGradient></defs><rect x="0.5" y="0.5" width="8" height="8" rx="1.2" fill="url(#eg)" stroke="#8a8c8c" stroke-width="1"/><path d="M2.2 4.5H6.8" stroke="#000" stroke-width="1.3"/><path d="M4.5 2.2V6.8" stroke="#000" stroke-width="1.3"/></svg>
<div class="hc" style="left:53px;top:529px;width:5px"></div>
<div class="ic" style="left:59px;top:521px"><svg width="16" height="16" viewBox="0 0 16 16"><circle cx="2.4" cy="7.7" r="1.5" fill="#dfe4e6" stroke="#7a8488" stroke-width="0.9"/><path d="M3.9 7.7H9.2" stroke="#4a5458" stroke-width="1.9"/><circle cx="11.9" cy="7.7" r="2.8" fill="#e6ecee" stroke="#4a5458" stroke-width="1.3"/></svg></div>
<div class="tt sel" style="left:82px;top:521px;letter-spacing:0.546px">IMultiValueConverter</div>
<svg class="exp" style="left:44px;top:542px" width="9" height="9" viewBox="0 0 9 9"><defs><linearGradient id="eg" x1="0" y1="0" x2="1" y2="1"><stop offset="0" stop-color="#fff"/><stop offset="1" stop-color="#cfcfcf"/></linearGradient></defs><rect x="0.5" y="0.5" width="8" height="8" rx="1.2" fill="url(#eg)" stroke="#8a8c8c" stroke-width="1"/><path d="M2.2 4.5H6.8" stroke="#000" stroke-width="1.3"/><path d="M4.5 2.2V6.8" stroke="#000" stroke-width="1.3"/></svg>
<div class="hc" style="left:53px;top:546px;width:5px"></div>
<div class="ic" style="left:59px;top:538px"><svg width="16" height="16" viewBox="0 0 16 16"><circle cx="2.4" cy="7.7" r="1.5" fill="#dfe4e6" stroke="#7a8488" stroke-width="0.9"/><path d="M3.9 7.7H9.2" stroke="#4a5458" stroke-width="1.9"/><circle cx="11.9" cy="7.7" r="2.8" fill="#e6ecee" stroke="#4a5458" stroke-width="1.3"/></svg></div>
<div class="tt" style="left:82px;top:539px;letter-spacing:0.530px">IValueConverter</div>
<svg class="exp" style="left:44px;top:559px" width="9" height="9" viewBox="0 0 9 9"><defs><linearGradient id="eg" x1="0" y1="0" x2="1" y2="1"><stop offset="0" stop-color="#fff"/><stop offset="1" stop-color="#cfcfcf"/></linearGradient></defs><rect x="0.5" y="0.5" width="8" height="8" rx="1.2" fill="url(#eg)" stroke="#8a8c8c" stroke-width="1"/><path d="M2.2 4.5H6.8" stroke="#000" stroke-width="1.3"/><path d="M4.5 2.2V6.8" stroke="#000" stroke-width="1.3"/></svg>
<div class="hc" style="left:53px;top:563px;width:5px"></div>
<div class="ic" style="left:59px;top:555px"><svg width="16" height="16" viewBox="0 0 16 16"><path d="M7.5 6.3H10M7.5 6.3V12.3H10" stroke="#6a6a6a" stroke-width="1" fill="none"/><path d="M5.3 0.3L8.8 3.7L3.5 9L0.1 5.5Z" fill="#ecd04a" stroke="#7a6418" stroke-width="0.9"/><path d="M12.4 3.2L14.8 5.5L11.6 8.6L9.3 6.2Z" fill="#e79be8" stroke="#7b3f8e" stroke-width="0.9"/><path d="M12.4 9.3L14.8 11.6L11.4 14.9L9.1 12.6Z" fill="#93b4e6" stroke="#203f78" stroke-width="0.9"/></svg></div>
<div class="tt" style="left:82px;top:556px;letter-spacing:0.354px">ListCollectionView</div>
<svg class="exp" style="left:44px;top:576px" width="9" height="9" viewBox="0 0 9 9"><defs><linearGradient id="eg" x1="0" y1="0" x2="1" y2="1"><stop offset="0" stop-color="#fff"/><stop offset="1" stop-color="#cfcfcf"/></linearGradient></defs><rect x="0.5" y="0.5" width="8" height="8" rx="1.2" fill="url(#eg)" stroke="#8a8c8c" stroke-width="1"/><path d="M2.2 4.5H6.8" stroke="#000" stroke-width="1.3"/><path d="M4.5 2.2V6.8" stroke="#000" stroke-width="1.3"/></svg>
<div class="hc" style="left:53px;top:580px;width:5px"></div>
<div class="ic" style="left:59px;top:572px"><svg width="16" height="16" viewBox="0 0 16 16"><path d="M7.5 6.3H10M7.5 6.3V12.3H10" stroke="#6a6a6a" stroke-width="1" fill="none"/><path d="M5.3 0.3L8.8 3.7L3.5 9L0.1 5.5Z" fill="#ecd04a" stroke="#7a6418" stroke-width="0.9"/><path d="M12.4 3.2L14.8 5.5L11.6 8.6L9.3 6.2Z" fill="#e79be8" stroke="#7b3f8e" stroke-width="0.9"/><path d="M12.4 9.3L14.8 11.6L11.4 14.9L9.1 12.6Z" fill="#93b4e6" stroke="#203f78" stroke-width="0.9"/></svg></div>
<div class="tt" style="left:82px;top:573px;letter-spacing:0.794px">MultiBinding</div>
<svg class="exp" style="left:44px;top:593px" width="9" height="9" viewBox="0 0 9 9"><defs><linearGradient id="eg" x1="0" y1="0" x2="1" y2="1"><stop offset="0" stop-color="#fff"/><stop offset="1" stop-color="#cfcfcf"/></linearGradient></defs><rect x="0.5" y="0.5" width="8" height="8" rx="1.2" fill="url(#eg)" stroke="#8a8c8c" stroke-width="1"/><path d="M2.2 4.5H6.8" stroke="#000" stroke-width="1.3"/><path d="M4.5 2.2V6.8" stroke="#000" stroke-width="1.3"/></svg>
<div class="hc" style="left:53px;top:597px;width:5px"></div>
<div class="ic" style="left:59px;top:589px"><svg width="16" height="16" viewBox="0 0 16 16"><path d="M7.5 6.3H10M7.5 6.3V12.3H10" stroke="#6a6a6a" stroke-width="1" fill="none"/><path d="M5.3 0.3L8.8 3.7L3.5 9L0.1 5.5Z" fill="#ecd04a" stroke="#7a6418" stroke-width="0.9"/><path d="M12.4 3.2L14.8 5.5L11.6 8.6L9.3 6.2Z" fill="#e79be8" stroke="#7b3f8e" stroke-width="0.9"/><path d="M12.4 9.3L14.8 11.6L11.4 14.9L9.1 12.6Z" fill="#93b4e6" stroke="#203f78" stroke-width="0.9"/></svg></div>
<div class="tt" style="left:82px;top:590px;letter-spacing:0.587px">MultiBindingExpression</div>
<svg class="exp" style="left:44px;top:610px" width="9" height="9" viewBox="0 0 9 9"><defs><linearGradient id="eg" x1="0" y1="0" x2="1" y2="1"><stop offset="0" stop-color="#fff"/><stop offset="1" stop-color="#cfcfcf"/></linearGradient></defs><rect x="0.5" y="0.5" width="8" height="8" rx="1.2" fill="url(#eg)" stroke="#8a8c8c" stroke-width="1"/><path d="M2.2 4.5H6.8" stroke="#000" stroke-width="1.3"/><path d="M4.5 2.2V6.8" stroke="#000" stroke-width="1.3"/></svg>
<div class="hc" style="left:53px;top:614px;width:5px"></div>
<div class="ic" style="left:59px;top:606px"><svg width="16" height="16" viewBox="0 0 16 16"><path d="M7.5 6.3H10M7.5 6.3V12.3H10" stroke="#6a6a6a" stroke-width="1" fill="none"/><path d="M5.3 0.3L8.8 3.7L3.5 9L0.1 5.5Z" fill="#ecd04a" stroke="#7a6418" stroke-width="0.9"/><path d="M12.4 3.2L14.8 5.5L11.6 8.6L9.3 6.2Z" fill="#e79be8" stroke="#7b3f8e" stroke-width="0.9"/><path d="M12.4 9.3L14.8 11.6L11.4 14.9L9.1 12.6Z" fill="#93b4e6" stroke="#203f78" stroke-width="0.9"/></svg></div>
<div class="tt" style="left:82px;top:607px;letter-spacing:0.606px">ObjectDataProvider</div>
<svg class="exp" style="left:44px;top:627px" width="9" height="9" viewBox="0 0 9 9"><defs><linearGradient id="eg" x1="0" y1="0" x2="1" y2="1"><stop offset="0" stop-color="#fff"/><stop offset="1" stop-color="#cfcfcf"/></linearGradient></defs><rect x="0.5" y="0.5" width="8" height="8" rx="1.2" fill="url(#eg)" stroke="#8a8c8c" stroke-width="1"/><path d="M2.2 4.5H6.8" stroke="#000" stroke-width="1.3"/><path d="M4.5 2.2V6.8" stroke="#000" stroke-width="1.3"/></svg>
<div class="hc" style="left:53px;top:631px;width:5px"></div>
<div class="ic" style="left:59px;top:623px"><svg width="16" height="16" viewBox="0 0 16 16"><path d="M7.5 6.3H10M7.5 6.3V12.3H10" stroke="#6a6a6a" stroke-width="1" fill="none"/><path d="M5.3 0.3L8.8 3.7L3.5 9L0.1 5.5Z" fill="#ecd04a" stroke="#7a6418" stroke-width="0.9"/><path d="M12.4 3.2L14.8 5.5L11.6 8.6L9.3 6.2Z" fill="#e79be8" stroke="#7b3f8e" stroke-width="0.9"/><path d="M12.4 9.3L14.8 11.6L11.4 14.9L9.1 12.6Z" fill="#93b4e6" stroke="#203f78" stroke-width="0.9"/></svg></div>
<div class="tt" style="left:82px;top:624px;letter-spacing:0.594px">PriorityBinding</div>
<svg class="exp" style="left:44px;top:644px" width="9" height="9" viewBox="0 0 9 9"><defs><linearGradient id="eg" x1="0" y1="0" x2="1" y2="1"><stop offset="0" stop-color="#fff"/><stop offset="1" stop-color="#cfcfcf"/></linearGradient></defs><rect x="0.5" y="0.5" width="8" height="8" rx="1.2" fill="url(#eg)" stroke="#8a8c8c" stroke-width="1"/><path d="M2.2 4.5H6.8" stroke="#000" stroke-width="1.3"/><path d="M4.5 2.2V6.8" stroke="#000" stroke-width="1.3"/></svg>
<div class="hc" style="left:53px;top:648px;width:5px"></div>
<div class="ic" style="left:59px;top:640px"><svg width="16" height="16" viewBox="0 0 16 16"><path d="M7.5 6.3H10M7.5 6.3V12.3H10" stroke="#6a6a6a" stroke-width="1" fill="none"/><path d="M5.3 0.3L8.8 3.7L3.5 9L0.1 5.5Z" fill="#ecd04a" stroke="#7a6418" stroke-width="0.9"/><path d="M12.4 3.2L14.8 5.5L11.6 8.6L9.3 6.2Z" fill="#e79be8" stroke="#7b3f8e" stroke-width="0.9"/><path d="M12.4 9.3L14.8 11.6L11.4 14.9L9.1 12.6Z" fill="#93b4e6" stroke="#203f78" stroke-width="0.9"/></svg></div>
<div class="tt" style="left:82px;top:641px;letter-spacing:0.509px">PriorityBindingExpression</div>
<svg class="exp" style="left:44px;top:661px" width="9" height="9" viewBox="0 0 9 9"><defs><linearGradient id="eg" x1="0" y1="0" x2="1" y2="1"><stop offset="0" stop-color="#fff"/><stop offset="1" stop-color="#cfcfcf"/></linearGradient></defs><rect x="0.5" y="0.5" width="8" height="8" rx="1.2" fill="url(#eg)" stroke="#8a8c8c" stroke-width="1"/><path d="M2.2 4.5H6.8" stroke="#000" stroke-width="1.3"/><path d="M4.5 2.2V6.8" stroke="#000" stroke-width="1.3"/></svg>
<div class="hc" style="left:53px;top:665px;width:5px"></div>
<div class="ic" style="left:59px;top:657px"><svg width="16" height="16" viewBox="0 0 16 16"><path d="M7.5 6.3H10M7.5 6.3V12.3H10" stroke="#6a6a6a" stroke-width="1" fill="none"/><path d="M5.3 0.3L8.8 3.7L3.5 9L0.1 5.5Z" fill="#ecd04a" stroke="#7a6418" stroke-width="0.9"/><path d="M12.4 3.2L14.8 5.5L11.6 8.6L9.3 6.2Z" fill="#e79be8" stroke="#7b3f8e" stroke-width="0.9"/><path d="M12.4 9.3L14.8 11.6L11.4 14.9L9.1 12.6Z" fill="#93b4e6" stroke="#203f78" stroke-width="0.9"/></svg></div>
<div class="tt" style="left:82px;top:658px;letter-spacing:0.660px">PropertyGroupDescription</div>
<svg class="exp" style="left:44px;top:678px" width="9" height="9" viewBox="0 0 9 9"><defs><linearGradient id="eg" x1="0" y1="0" x2="1" y2="1"><stop offset="0" stop-color="#fff"/><stop offset="1" stop-color="#cfcfcf"/></linearGradient></defs><rect x="0.5" y="0.5" width="8" height="8" rx="1.2" fill="url(#eg)" stroke="#8a8c8c" stroke-width="1"/><path d="M2.2 4.5H6.8" stroke="#000" stroke-width="1.3"/><path d="M4.5 2.2V6.8" stroke="#000" stroke-width="1.3"/></svg>
<div class="hc" style="left:53px;top:682px;width:5px"></div>
<div class="ic" style="left:59px;top:674px"><svg width="16" height="16" viewBox="0 0 16 16"><path d="M7.5 6.3H10M7.5 6.3V12.3H10" stroke="#6a6a6a" stroke-width="1" fill="none"/><path d="M5.3 0.3L8.8 3.7L3.5 9L0.1 5.5Z" fill="#ecd04a" stroke="#7a6418" stroke-width="0.9"/><path d="M12.4 3.2L14.8 5.5L11.6 8.6L9.3 6.2Z" fill="#e79be8" stroke="#7b3f8e" stroke-width="0.9"/><path d="M12.4 9.3L14.8 11.6L11.4 14.9L9.1 12.6Z" fill="#93b4e6" stroke="#203f78" stroke-width="0.9"/></svg></div>
<div class="tt" style="left:82px;top:675px;letter-spacing:0.361px">RelativeSource</div>
<svg class="exp" style="left:44px;top:695px" width="9" height="9" viewBox="0 0 9 9"><defs><linearGradient id="eg" x1="0" y1="0" x2="1" y2="1"><stop offset="0" stop-color="#fff"/><stop offset="1" stop-color="#cfcfcf"/></linearGradient></defs><rect x="0.5" y="0.5" width="8" height="8" rx="1.2" fill="url(#eg)" stroke="#8a8c8c" stroke-width="1"/><path d="M2.2 4.5H6.8" stroke="#000" stroke-width="1.3"/><path d="M4.5 2.2V6.8" stroke="#000" stroke-width="1.3"/></svg>
<div class="hc" style="left:53px;top:699px;width:5px"></div>
<div class="ic" style="left:59px;top:691px"><svg width="16" height="16" viewBox="0 0 16 16"><rect x="6.8" y="2.5" width="7.6" height="5.6" rx="0.8" fill="#f3e39a" stroke="#8f7a35" stroke-width="1"/><path d="M9.5 4.8H12M9.5 6.3H12" stroke="#8a7020" stroke-width="0.9"/><rect x="0.7" y="6.5" width="7.6" height="5.7" rx="0.8" fill="#f3e39a" stroke="#8f7a35" stroke-width="1"/><path d="M3 8.8H5.8M3 10.3H5.8" stroke="#8a7020" stroke-width="0.9"/></svg></div>
<div class="tt" style="left:82px;top:692px;letter-spacing:0.542px">RelativeSourceMode</div>
<div class="a" style="left:30px;top:518px;width:188px;height:24px;border:3px solid #dc3a44"></div>
<!-- scrollbar -->
<div class="a" style="left:321px;top:78px;width:16px;height:629px;background:#f0f0f0"></div>
<div class="a" style="left:321px;top:346px;width:16px;height:171px;background:#cdcdcd"></div>
<svg class="a" style="left:325px;top:83px" width="10" height="8" viewBox="0 0 10 8"><path d="M1.5 6L5 2.5L8.5 6" stroke="#a6a6a6" stroke-width="1.3" fill="none"/></svg>
<!-- splitter -->
<div class="a" style="left:337px;top:77px;width:1px;height:630px;background:repeating-linear-gradient(#555 0 2px,transparent 2px 3px)"></div>
<div class="a" style="left:339px;top:77px;width:1px;height:630px;background:#9aa0aa"></div>
<div class="a" style="left:340px;top:77px;width:7px;height:630px;background:#fff"></div>
<div class="a" style="left:337px;top:77px;width:10px;height:1px;background:repeating-linear-gradient(90deg,#555 0 2px,transparent 2px 3px)"></div>
<div id="code">
<div class="cl" style="top:2px"><span class="kg">using</span> System;</div>
<div class="cl" style="top:17px"><span class="kg">using</span> System.Globalization;</div>
<div class="cl" style="top:32px"><span class="kg">namespace</span> System.Windows.Data</div>
<div class="cl" style="top:47px"><span class="br">{</span></div>
<div class="cl" style="top:62px">    <span class="kb">public</span> <span class="kr">interface</span> IMultiValueConverter</div>
<div class="cl" style="top:77px">    <span class="br">{</span></div>
<div class="cl" style="top:92px">        <span class="kr">object</span> <span class="fn">Convert</span><span class="br">(</span><span class="kr">object</span><span class="br">[]</span> values, Type targetType, <span class="kr">object</span> parameter, CultureInfo culture<span class="br">)</span>;</div>
<div class="cl" style="top:107px">        <span class="kr">object</span><span class="br">[]</span> <span class="fn">ConvertBack</span><span class="br">(</span><span class="kr">object</span> <b>value</b>, Type<span class="br">[]</span> targetTypes, <span class="kr">object</span> parameter, CultureInfo culture<span class="br">)</span>;</div>
<div class="cl" style="top:122px">    <span class="br">}</span></div>
<div class="cl" style="top:137px"><span class="br">}</span></div>
</div>
<div class="a" style="left:346px;top:77px;width:1px;height:630px;background:repeating-linear-gradient(#5a5a3a 0 2px,transparent 2px 3px)"></div>
<!-- fold markers -->
<div class="a" style="left:346px;top:110px;width:11px;height:11px;border:1px solid #5a5a5a;background:#fff"></div>
<div class="a" style="left:348px;top:115px;width:7px;height:1px;background:#000"></div>
<div class="a" style="left:346px;top:140px;width:11px;height:11px;border:1px solid #5a5a5a;background:#fff"></div>
<div class="a" style="left:348px;top:145px;width:7px;height:1px;background:#000"></div>
<div class="a" style="left:351px;top:121px;width:1px;height:19px;background:#808080"></div>
<div class="a" style="left:351px;top:151px;width:1px;height:70px;background:#808080"></div>
<div class="a" style="left:351px;top:205px;width:9px;height:1px;background:#808080"></div>
<div class="a" style="left:351px;top:220px;width:9px;height:1px;background:#808080"></div>
<svg class="a" style="left:890px;top:635px;filter:blur(1.2px)" width="190" height="60" viewBox="0 0 190 60" opacity="0.7"><path d="M12 10L52 50M50 12L14 50" stroke="#fffff6" stroke-width="9"/><path d="M70 22H92V44H70Z M100 20H120V46H100Z M126 22H148V44H126Z M154 20H176V46H154Z" fill="none" stroke="#fffff4" stroke-width="5"/></svg>
</body></html>
